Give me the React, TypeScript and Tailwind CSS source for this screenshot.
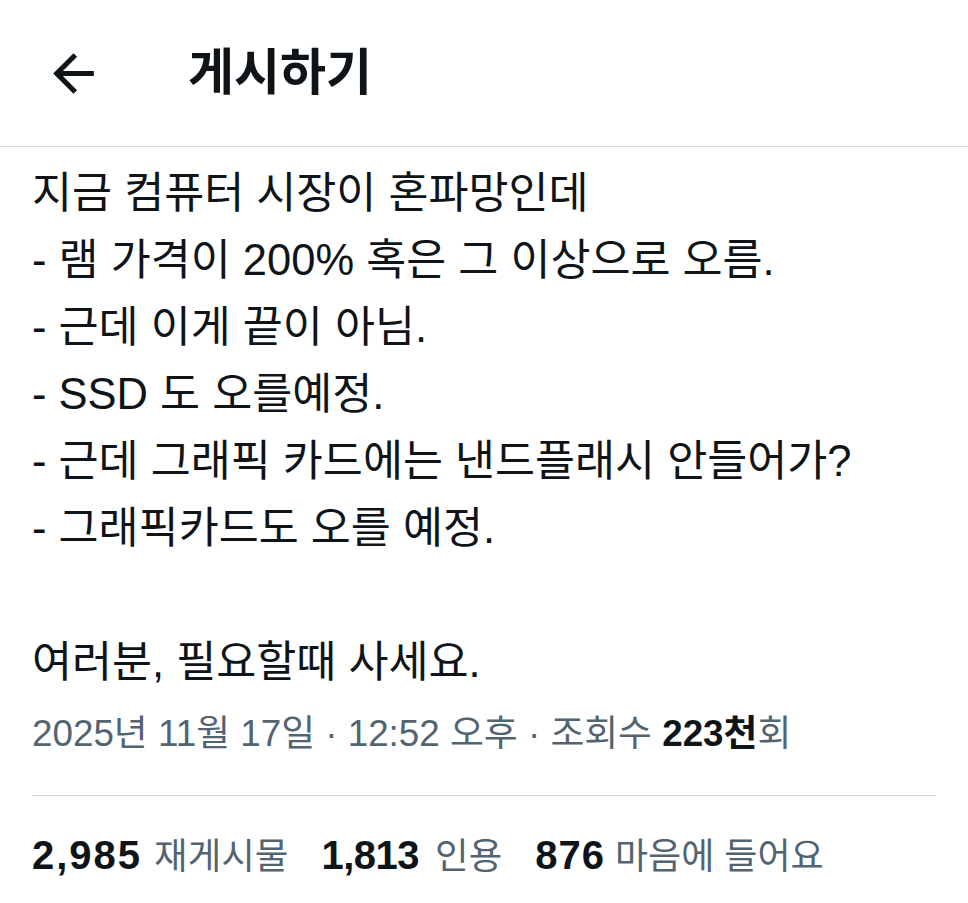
import React from "react";

const font = { fontFamily: '"Liberation Sans", "Noto Sans CJK KR", sans-serif' };

export default function App() {
  const lines = [
    "지금 컴퓨터 시장이 혼파망인데",
    "- 램 가격이 200% 혹은 그 이상으로 오름.",
    "- 근데 이게 끝이 아님.",
    "- SSD 도 오를예정.",
    "- 근데 그래픽 카드에는 낸드플래시 안들어가?",
    "- 그래픽카드도 오를 예정.",
    "\u00a0",
    "여러분, 필요할때 사세요.",
  ];
  return (
    <div className="w-[968px] h-[903px] bg-white text-[#0f1419] overflow-hidden font-['Liberation_Sans','Noto_Sans_CJK_KR',sans-serif]" style={font}>
      <header className="h-[147px] border-b border-[#cfd9de] flex items-center">
        <div className="w-[61px] h-[61px] ml-[43px] flex items-center justify-center">
          <svg viewBox="0 0 24 24" className="w-[61px] h-[61px]" fill="#0f1419">
            <path d="M20 11H7.83l5.59-5.59L12 4l-8 8 8 8 1.41-1.41L7.83 13H20v-2z" />
          </svg>
        </div>
        <h1 className="ml-[84px] text-[50px] font-bold leading-none">게시하기</h1>
      </header>
      <main className="px-[32px]">
        <div className="pt-[13px] text-[43.5px] leading-[67px]">
          {lines.map((l, i) => (
            <div key={i} className="whitespace-pre">{l}</div>
          ))}
        </div>
        <div className="mt-[8px] text-[36.8px] leading-[60px] text-[#536471]">
          2025년 11월 17일 · 12:52 오후 · 조회수 <span className="font-bold text-[#0f1419]">223천</span>회
        </div>
        <div className="mt-[31px] border-t border-[#cfd9de]" />
        <div className="mt-[29px] flex items-baseline leading-[60px]">
          <span className="font-bold text-[40px] tracking-[2px]">2,985</span>
          <span className="ml-[12px] text-[36.5px] text-[#536471]">재게시물</span>
          <span className="ml-[33px] font-bold text-[40px] tracking-[-0.5px]">1,813</span>
          <span className="ml-[16px] text-[36.5px] text-[#536471]">인용</span>
          <span className="ml-[33px] font-bold text-[40px] tracking-[1px]">876</span>
          <span className="ml-[10px] text-[36px] text-[#536471]">마음에 들어요</span>
        </div>
      </main>
    </div>
  );
}
